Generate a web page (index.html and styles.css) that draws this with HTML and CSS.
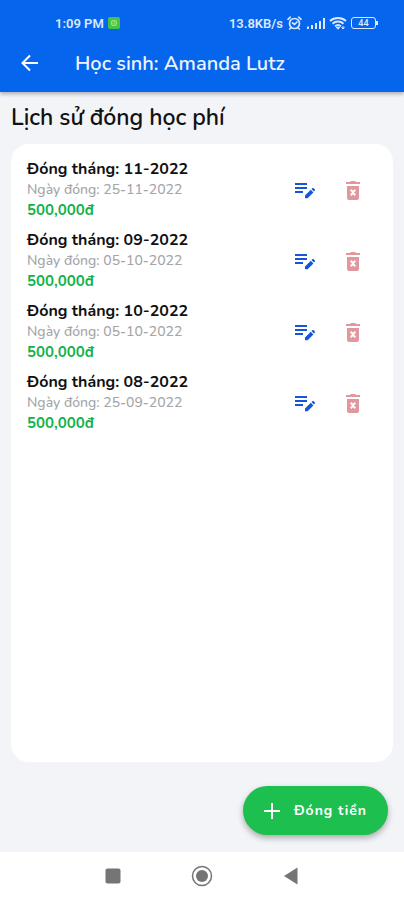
FILE: index.html
```html
<!DOCTYPE html>
<html lang="vi">
    <head>
        <meta charset="UTF-8">
        <meta name="viewport" content="width=device-width, initial-scale=1">
        <title>Lịch sử đóng học phí</title>
        <link rel="stylesheet" href="styles.css">
    </head>
    <body>
        <svg class="sprite" aria-hidden="true">
            <symbol id="edit" viewBox="0 0 20 20">
                <path d="M0 3h12v2H0zM0 7h12v2H0zM0 11h8v2H0z"/>
                <path d="M10 15.500 15.800 9.800l2.600 2.600-5.800 5.800H10zM16.500 9.100l.8-.8c.4-.4 1-.4 1.400 0l1 1c.4.4.4 1 0 1.400l-.8.8z"/>
            </symbol>
            <symbol id="trash" viewBox="0 0 20 20">
                <path fill-rule="evenodd" d="M4 6h12v12a2 2 0 0 1-2 2H6a2 2 0 0 1-2-2zM7 10.500l2 2-2 2L8.500 16l1.500-1.800 1.500 1.800 1.500-1.500-2-2 2-2L11.500 9 10 10.800 8.500 9z"/>
                <path d="M3 2h4l1-1h4l1 1h4v2H3z"/>
            </symbol>
        </svg>
        <header class="cabecera">
            <div class="status">
                <span class="status-left">1:09 PM
                    <svg class="app-dot" viewBox="0 0 12 12"><rect width="12" height="12" rx="2" fill="#43c443"/><rect x="3.500" y="3.500" width="5" height="5" rx="1" fill="#6fd05a" stroke="#a5df72"/></svg>
                </span>
                <span class="status-right">13.8KB/s
                    <svg width="15" height="14" viewBox="0 0 15 14" fill="none" stroke="#dce8ff" stroke-width="1.700" stroke-linecap="round"><circle cx="7.500" cy="7.500" r="5"/><path d="M1 3.300 3.300 1.200M14 3.300l-2.300-2.100M5.500 7l2 1.500L10 6M3.700 12l-1 1M11.300 12l1 1"/></svg>
                    <svg width="19" height="14" viewBox="0 0 19 14" fill="#dce8ff"><path d="M1 10.500h2V13H1zM5 9h2v4H5zM9 7h2v6H9zM13 5h2v8h-2zM17 2h2v11h-2z"/></svg>
                    <svg width="18" height="14" viewBox="0 0 18 14" fill="none" stroke="#dce8ff" stroke-width="2"><path d="M1 5c4.500-4 11.500-4 16 0M3.500 7.700c3.200-2.900 7.800-2.900 11 0M6 10.200c1.800-1.500 4.200-1.500 6 0"/><path d="M7.200 11.200h3.600L9 13.200zM14 10v3M12.500 11.500 14 13l1.500-1.500" fill="#dce8ff" stroke-width="1"/></svg>
                    <span class="battery">44</span>
                </span>
            </div>
            <div class="barra">
                <button type="button" class="volver" aria-label="Quay lại">
                    <svg viewBox="0 0 20 20" fill="none" stroke="#fff" stroke-width="2"><path d="M18 10H3M10 2.500 2.500 10l7.500 7.500"/></svg>
                </button>
                <h1>Học sinh: Amanda Lutz</h1>
            </div>
        </header>
        <main>
            <h2>Lịch sử đóng học phí</h2>
            <ul class="lista">
                <li class="pago">
                    <div class="datos">
                        <p class="mes">Đóng tháng: 11-2022</p>
                        <p class="fecha">Ngày đóng: 25-11-2022</p>
                        <p class="monto">500,000đ</p>
                    </div>
                    <button type="button" class="editar" aria-label="Sửa"><svg><use href="#edit"/></svg></button>
                    <button type="button" class="borrar" aria-label="Xóa"><svg><use href="#trash"/></svg></button>
                </li>
                <li class="pago">
                    <div class="datos">
                        <p class="mes">Đóng tháng: 09-2022</p>
                        <p class="fecha">Ngày đóng: 05-10-2022</p>
                        <p class="monto">500,000đ</p>
                    </div>
                    <button type="button" class="editar" aria-label="Sửa"><svg><use href="#edit"/></svg></button>
                    <button type="button" class="borrar" aria-label="Xóa"><svg><use href="#trash"/></svg></button>
                </li>
                <li class="pago">
                    <div class="datos">
                        <p class="mes">Đóng tháng: 10-2022</p>
                        <p class="fecha">Ngày đóng: 05-10-2022</p>
                        <p class="monto">500,000đ</p>
                    </div>
                    <button type="button" class="editar" aria-label="Sửa"><svg><use href="#edit"/></svg></button>
                    <button type="button" class="borrar" aria-label="Xóa"><svg><use href="#trash"/></svg></button>
                </li>
                <li class="pago">
                    <div class="datos">
                        <p class="mes">Đóng tháng: 08-2022</p>
                        <p class="fecha">Ngày đóng: 25-09-2022</p>
                        <p class="monto">500,000đ</p>
                    </div>
                    <button type="button" class="editar" aria-label="Sửa"><svg><use href="#edit"/></svg></button>
                    <button type="button" class="borrar" aria-label="Xóa"><svg><use href="#trash"/></svg></button>
                </li>
            </ul>
            <button type="button" class="agregar">
                <svg viewBox="0 0 16 16" fill="none" stroke="#fff" stroke-width="2"><path d="M8 0v16M0 8h16"/></svg>
                Đóng tiền
            </button>
        </main>
        <nav class="sistema">
            <button type="button" aria-label="Gần đây"><svg viewBox="0 0 22 22" fill="#757575"><rect x="3.500" y="3.500" width="15" height="15" rx="2"/></svg></button>
            <button type="button" aria-label="Màn hình chính"><svg viewBox="0 0 22 22" fill="#757575"><circle cx="11" cy="11" r="9.500" fill="none" stroke="#757575" stroke-width="1.500"/><circle cx="11" cy="11" r="6"/></svg></button>
            <button type="button" aria-label="Trở về"><svg viewBox="0 0 22 22" fill="#757575"><path d="M4 11 17.500 2.500v17z"/></svg></button>
        </nav>
    </body>
</html>
```
FILE: styles.css
```css
* {
    box-sizing: border-box;
    margin: 0;
    padding: 0;
}
body {
    display: flex;
    flex-direction: column;
    min-height: 100vh;
    background: #f2f4f7;
    color: #111;
    font-family: Nunito, "Open Sans", "Noto Sans", sans-serif;
}
button {
    border: none;
    background: none;
    font-family: inherit;
    cursor: pointer;
}
svg {
    display: block;
}
.sprite {
    display: none;
}
.cabecera {
    background: #0565ed;
    color: #eef4ff;
    padding-top: 12px;
    box-shadow: 0 2px 4px rgba(0, 0, 0, 0.3);
}
.status {
    display: flex;
    justify-content: space-between;
    padding: 0 28px 0 55px;
    height: 22px;
    font-family: Roboto, sans-serif;
    font-size: 13px;
    font-weight: 600;
    color: #dce8ff;
}
.status-left, .status-right {
    display: flex;
    align-items: center;
    gap: 4px;
}
.app-dot {
    width: 12px;
    height: 12px;
}
.battery {
    position: relative;
    width: 25px;
    height: 12px;
    border: 1px solid #dce8ff;
    border-radius: 3px;
    font-size: 9px;
    line-height: 10px;
    text-align: center;
}
.battery::after {
    content: "";
    position: absolute;
    right: -3px;
    top: 3px;
    width: 2px;
    height: 4px;
    background: #dce8ff;
}
.barra {
    display: flex;
    align-items: center;
    gap: 35px;
    height: 58px;
    padding: 0 20px;
}
.volver svg {
    width: 20px;
    height: 20px;
}
h1 {
    font-size: 20px;
    font-weight: 600;
}
main {
    flex: 1;
    display: flex;
    flex-direction: column;
    padding: 10px 11px 17px;
}
h2 {
    font-size: 23px;
    font-weight: 600;
    line-height: 32px;
    margin-bottom: 10px;
}
.lista {
    flex: 1;
    list-style: none;
    background: #fff;
    border-radius: 18px;
    padding: 15px 16px;
}
.pago {
    display: flex;
    align-items: center;
    margin-bottom: 10px;
}
.datos {
    flex: 1;
    line-height: 20px;
}
.mes {
    font-size: 16px;
    font-weight: 700;
    line-height: 21px;
}
.fecha {
    font-size: 14px;
    font-weight: 500;
    color: #a3a5a8;
}
.monto {
    font-size: 15px;
    font-weight: 700;
    color: #12b24a;
}
.editar, .borrar {
    padding: 14px;
}
.editar svg, .borrar svg {
    width: 20px;
    height: 20px;
}
.editar {
    fill: #1455d9;
}
.borrar {
    fill: #e2979f;
}
.agregar {
    align-self: flex-end;
    display: flex;
    align-items: center;
    gap: 14px;
    height: 49px;
    margin: 24px 5px 0 0;
    padding: 0 21px;
    border-radius: 25px;
    background: #1dc04f;
    color: #fff;
    font-size: 14px;
    font-weight: 700;
    letter-spacing: 1px;
    box-shadow: 0 3px 6px rgba(0, 0, 0, 0.3);
}
.agregar svg {
    width: 16px;
    height: 16px;
}
.sistema {
    display: flex;
    justify-content: center;
    align-items: center;
    gap: 67px;
    height: 48px;
    background: #fff;
}
.sistema svg {
    width: 22px;
    height: 22px;
}
```
